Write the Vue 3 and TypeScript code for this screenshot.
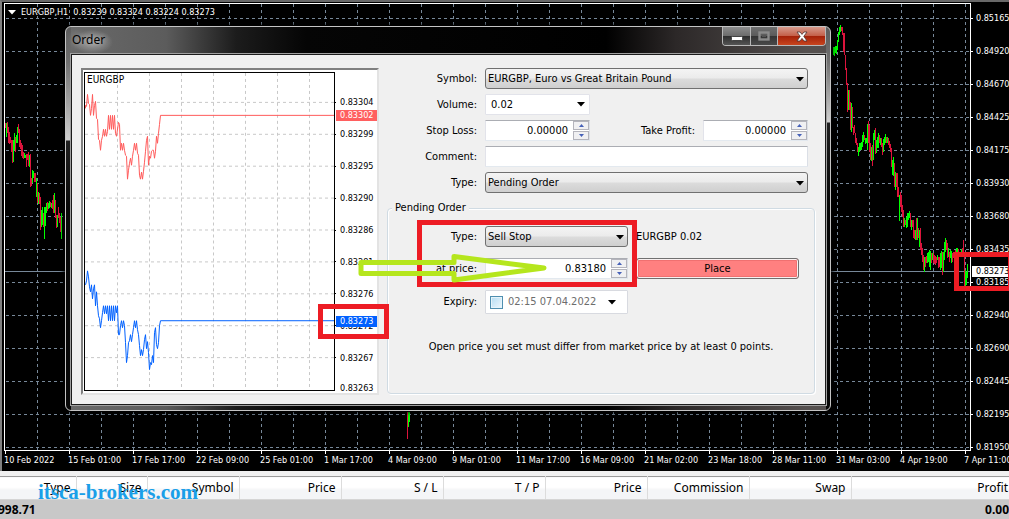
<script setup lang="ts">
import { ref } from 'vue'

type Bar = { x: number; top: number; bottom: number; up: boolean }

// Each entry reads "x high low", with a leading + for a rising bar and - for a falling one.
function readBars(src: string, originX: number, originY: number): Bar[] {
  return src.trim().split(/\s*,\s*/).map((item) => {
    const [x, high, low] = item.slice(1).split(' ').map(Number)
    return {
      x: originX + Math.floor(x / 3),
      top: originY + Math.round(high / 3),
      bottom: originY + Math.round(low / 3),
      up: item[0] === '+',
    }
  })
}

function readLine(src: string, originX: number, originY: number): string {
  return src.trim().split(/\s+/).map((pair) => {
    const [x, y] = pair.split(',').map(Number)
    return `${originX + Math.floor(x / 3) + 0.5},${originY + Math.floor(y / 3) + 0.5}`
  }).join(' ')
}

const february = readBars(`-14 357 380,-17 368 384,+19 370 410,-22 366 400,-25 380 430,-28 395 432,-31 412 430,-34 420 455,-37 420 488,+40 420 486,+43 400 450,-46 410 455,+49 405 430,+52 380 428,-55 373 400,-58 388 440,-61 420 448,-64 430 468,-67 435 475,-70 455 478,+73 458 474,+76 465 475,-79 462 500,-82 462 480,-85 456 498,+88 465 500,-91 462 560,-94 535 558,+97 510 550,+100 512 535,-103 518 545,-106 520 545,+109 535 590,-112 550 608,+115 575 612,-118 580 612,-121 592 690,+124 630 680,+127 622 675,-130 640 680,+133 620 716,+136 622 678,+139 608 640,-142 605 632,+145 610 628,+148 603 625,-151 605 622,+154 608 625,-157 600 628,-160 585 640,+163 580 640,-166 600 655,-169 645 685,+172 645 682,-175 620 655,-178 640 670,-181 650 695,+184 640 716`, 0, 0)
const march = readBars('-232 36 117,+235 36 80,+238 36 65', 330, 400)
const april = readBars(`+25 140 165,+28 140 168,+31 138 160,+34 138 162,+37 120 150,+40 95 125,+43 80 105,+46 75 95,-49 82 92,-52 82 105,-55 98 155,-58 100 165,-61 165 210,-64 205 255,-67 250 335,+70 270 330,-73 270 330,-76 305 390,+79 310 395,-82 320 385,-85 380 405,-88 375 400,-91 398 430,-94 415 435,-97 430 455,+100 440 467,+103 430 455,+106 430 450,+109 425 450,+112 405 440,+115 395 425,-118 405 420,+121 415 432,+124 415 428,+127 372 450,-130 362 430,-133 375 455,-136 430 480,+139 440 482,-142 435 497,+145 400 480,+148 390 420,-151 384 462,+154 420 460,+157 410 445,+160 400 445,-163 405 430,+166 415 435,-169 415 440,-172 430 465,+175 418 455,+178 410 435,+181 403 430,-184 410 430,+187 410 428,-190 415 435,-193 422 445,-196 432 455,-199 445 500,+202 480 525,+205 470 528,-208 490 560,+211 515 570,-214 518 560,-217 520 590,-220 560 590,+223 585 663,-226 577 620,-229 585 635,-232 615 650,-235 630 680,+238 655 680,-241 660 675,+244 650 685,+247 640 680,+250 640 660,+253 632 655,-256 640 680,+259 660 690,-262 660 680,-265 660 715,-268 690 718,+271 690 720,-274 655 720,+277 655 720,-280 685 715,+283 690 742,-286 685 750,-289 730 765,-292 745 785,-295 765 810,+298 770 815,-301 770 800,-304 768 788,+307 758 790,+310 755 785,+313 750 800,+316 752 810,-319 758 790,+322 758 780,-325 760 788,-328 765 792,-331 768 795,-334 770 788,+337 765 780,-340 772 805,-343 770 800,+346 760 810,+349 752 805,-352 755 825,+355 755 815,+358 725 780,+361 715 755,-364 720 750,-367 730 775,+370 745 770,-373 755 785,+376 750 775,+379 752 788,-382 758 785,-385 755 775,-388 755 780,-391 750 770,+394 745 770,+397 743 760,-400 748 764,+409 747 760,-412 745 765,-415 720 770,-418 760 860,+421 810 865,+424 815 855,+427 792 835`, 825, 0)
const bars = [...february, ...march, ...april]

const askLine = readLine(`255,325 257,315 259,318 262,283 265,310 268,312 271,347 274,325 277,283 280,345 283,315 286,303 289,355 292,358 295,418 298,422 301,450 304,420 307,408 310,388 313,408 316,388 319,408 322,395 325,346 328,388 331,346 334,388 337,346 340,388 343,346 346,400 349,408 355,367 358,372 361,450 364,430 367,452 370,430 373,450 376,465 379,468 382,538 385,510 388,490 391,475 394,497 397,470 400,450 403,430 406,450 409,430 412,460 415,465 418,525 421,538 424,516 427,538 430,515 433,488 436,455 439,420 442,408 445,495 448,470 451,475 454,455 457,452 460,452 463,475 466,455 469,410 472,430 475,400 478,372 481,346 1002,346`, 0, 0)
const bidLine = readLine(`75,255 78,245 82,213 85,232 88,262 91,278 94,255 97,298 100,268 103,255 106,320 109,277 112,318 115,350 118,358 121,385 124,365 127,340 130,318 133,343 136,318 139,343 142,318 145,365 148,318 151,365 154,318 157,365 160,318 163,365 166,318 169,340 172,318 175,405 178,405 181,380 184,364 187,385 190,364 193,380 196,430 199,490 202,470 205,430 208,425 211,405 214,428 217,405 220,385 223,364 226,385 229,364 232,390 235,405 238,440 241,470 244,450 247,470 250,450 253,420 256,405 259,448 262,427 265,460 268,512 271,490 274,495 277,470 280,490 283,400 286,385 289,435 292,448 295,430 298,380 301,364 822,364`, 60, 200)

const columns = Array.from({ length: 30 }, (_, i) => 37 + i * 32)
const rows = Array.from({ length: 14 }, (_, i) => 18 + i * 33)
const dateTicks = Array.from({ length: 16 }, (_, i) => 5 + i * 64)
const tickColumns = Array.from({ length: 7 }, (_, i) => 117 + i * 32)
const tickRows = Array.from({ length: 9 }, (_, i) => 102 + i * 32)

const prices = ['0.85165', '0.84920', '0.84670', '0.84425', '0.84175', '0.83930', '0.83680', '0.83435', '0.83185', '0.82940', '0.82690', '0.82445', '0.82195', '0.81950']
const dates = ['10 Feb 2022', '15 Feb 01:00', '17 Feb 17:00', '22 Feb 09:00', '25 Feb 01:00', '1 Mar 17:00', '4 Mar 09:00', '9 Mar 01:00', '11 Mar 17:00', '16 Mar 09:00', '21 Mar 02:00', '23 Mar 18:00', '28 Mar 11:00', '31 Mar 03:00', '4 Apr 19:00', '7 Apr 11:00']
const tickPrices = ['0.83304', '0.83299', '0.83295', '0.83290', '0.83286', '0.83281', '0.83276', '0.83272', '0.83267', '0.83263']
const headings = ['Type', 'Size', 'Symbol', 'Price', 'S / L', 'T / P', 'Price', 'Commission', 'Swap', 'Profit']

const volume = ref('0.02')
const stopLoss = ref('0.00000')
const takeProfit = ref('0.00000')
const comment = ref('')
const atPrice = ref('0.83180')
const expiry = ref('02:15 07.04.2022')
const expires = ref(false)
</script>

<template>
  <main class="desk">
    <section class="chart">
      <div class="plot-row">
        <svg class="plot" viewBox="4 2 970 452" preserveAspectRatio="none" aria-hidden="true">
          <g class="grid">
            <line v-for="x in columns" :key="'c' + x" :x1="x + 0.5" :x2="x + 0.5" y1="4" y2="450" />
            <line v-for="y in rows" :key="'r' + y" x1="6" x2="970" :y1="y + 0.5" :y2="y + 0.5" />
          </g>
          <rect class="level" x="5" y="271" width="965" height="1" />
          <rect
            v-for="(bar, i) in bars" :key="i" :class="bar.up ? 'rise' : 'fall'"
            :x="bar.x" :y="bar.top" width="1" :height="bar.bottom - bar.top"
          />
          <g class="axis">
            <rect x="4" y="3" width="967" height="1" />
            <rect x="4" y="3" width="1" height="448" />
            <rect x="970" y="3" width="1" height="448" />
            <rect x="4" y="450" width="967" height="1" />
            <rect v-for="x in dateTicks" :key="x" :x="x" y="450" width="1" height="4" />
            <rect v-for="y in rows" :key="y" x="970" :y="y" width="3" height="1" />
          </g>
        </svg>
        <div class="prices">
          <span v-for="p in prices" :key="p">{{ p }}</span>
          <b class="last">0.83273</b>
        </div>
      </div>
      <div class="dates"><span v-for="d in dates" :key="d">{{ d }}</span></div>
      <div class="quote">
        <svg width="8" height="5" viewBox="0 0 8 5" aria-hidden="true"><path d="M0 0H8L4 4.5Z" fill="#fff" /></svg>
        <span>EURGBP,H1&nbsp; 0.83239 0.83324 0.83224 0.83273</span>
      </div>
    </section>

    <section class="orders">
      <table>
        <thead><tr><th v-for="(h, i) in headings" :key="i" scope="col">{{ h }}</th></tr></thead>
        <tbody><tr><td colspan="9"><span class="balance">998.71</span></td><td class="profit">0.00</td></tr></tbody>
      </table>
      <a class="site" href="#">itsca-brokers.com</a>
    </section>

    <section class="dialog" role="dialog" aria-labelledby="dialog-title">
      <header class="titlebar">
        <h1 id="dialog-title">Order</h1>
        <div class="controls">
          <button class="min" type="button" aria-label="Minimize">
            <svg width="12" height="5" viewBox="0 0 12 5"><rect x="0.5" y="0.5" width="11" height="4" rx="1" fill="#fff" stroke="#444" /></svg>
          </button>
          <button class="max" type="button" aria-label="Maximize" disabled>
            <svg width="12" height="10" viewBox="0 0 12 10"><rect x="1.5" y="1.5" width="9" height="7" fill="none" stroke="#8b8b8b" stroke-width="2.4" /><rect x="4" y="4" width="4" height="2" fill="#555" /></svg>
          </button>
          <button class="close" type="button" aria-label="Close">
            <svg width="12" height="11" viewBox="0 0 12 11"><path d="M1 1H4L6 3.4 8 1H11L7.8 5.3 11 10H8L6 7.4 4 10H1L4.2 5.3Z" fill="#fff" stroke="#4a3030" stroke-width="0.8" /></svg>
          </button>
        </div>
      </header>
      <div class="client">
        <div class="ticks">
          <svg class="tick-plot" viewBox="84 70 253 324" preserveAspectRatio="none" aria-hidden="true">
            <g class="tick-grid">
              <line v-for="x in tickColumns" :key="x" :x1="x + 0.5" :x2="x + 0.5" y1="73" y2="391" />
              <line v-for="y in tickRows" :key="y" x1="85" x2="334" :y1="y + 0.5" :y2="y + 0.5" />
            </g>
            <polyline class="ask" :points="askLine" />
            <polyline class="bid" :points="bidLine" />
            <rect class="frame" x="84.5" y="72.5" width="250" height="319" />
            <rect v-for="y in tickRows" :key="'t' + y" x="334" :y="y" width="2" height="1" />
          </svg>
          <span class="tick-name">EURGBP</span>
          <div class="tick-prices">
            <span v-for="p in tickPrices" :key="p">{{ p }}</span>
            <b class="ask-tag">0.83302</b>
            <b class="bid-tag">0.83273</b>
          </div>
        </div>

        <form class="form" @submit.prevent>
          <div class="main-fields">
            <label for="symbol">Symbol:</label>
            <div class="drop wide">
              <select id="symbol"><option>EURGBP, Euro vs Great Britain Pound</option></select>
              <svg width="8" height="5" viewBox="0 0 8 5" aria-hidden="true"><path d="M0 0H8L4 4.5Z" /></svg>
            </div>
            <label for="volume">Volume:</label>
            <div class="combo">
              <input id="volume" v-model="volume" type="text">
              <button type="button" aria-label="Volume list"><svg width="8" height="5" viewBox="0 0 8 5"><path d="M0 0H8L4 4.5Z" /></svg></button>
            </div>
            <label class="row3" for="stop-loss">Stop Loss:</label>
            <div class="spin">
              <input id="stop-loss" v-model="stopLoss" type="text">
              <div class="steps">
                <button type="button" aria-label="Raise stop loss"><svg width="5" height="3" viewBox="0 0 5 3"><path d="M0 3L2.5 0 5 3Z" /></svg></button>
                <button type="button" aria-label="Lower stop loss"><svg width="5" height="3" viewBox="0 0 5 3"><path d="M0 0L2.5 3 5 0Z" /></svg></button>
              </div>
            </div>
            <label for="take-profit">Take Profit:</label>
            <div class="spin">
              <input id="take-profit" v-model="takeProfit" type="text">
              <div class="steps">
                <button type="button" aria-label="Raise take profit"><svg width="5" height="3" viewBox="0 0 5 3"><path d="M0 3L2.5 0 5 3Z" /></svg></button>
                <button type="button" aria-label="Lower take profit"><svg width="5" height="3" viewBox="0 0 5 3"><path d="M0 0L2.5 3 5 0Z" /></svg></button>
              </div>
            </div>
            <label for="comment">Comment:</label>
            <input id="comment" v-model="comment" class="box wide" type="text">
            <label for="kind">Type:</label>
            <div class="drop wide">
              <select id="kind"><option>Pending Order</option></select>
              <svg width="8" height="5" viewBox="0 0 8 5" aria-hidden="true"><path d="M0 0H8L4 4.5Z" /></svg>
            </div>
          </div>

          <fieldset class="pending">
            <legend>Pending Order</legend>
            <div class="pending-fields">
              <label for="pending-kind">Type:</label>
              <div class="drop">
                <select id="pending-kind"><option>Sell Stop</option></select>
                <svg width="8" height="5" viewBox="0 0 8 5" aria-hidden="true"><path d="M0 0H8L4 4.5Z" /></svg>
              </div>
              <span class="lot">EURGBP 0.02</span>
              <label for="at-price">at price:</label>
              <div class="spin">
                <input id="at-price" v-model="atPrice" type="text">
                <div class="steps">
                  <button type="button" aria-label="Raise price"><svg width="5" height="3" viewBox="0 0 5 3"><path d="M0 3L2.5 0 5 3Z" /></svg></button>
                  <button type="button" aria-label="Lower price"><svg width="5" height="3" viewBox="0 0 5 3"><path d="M0 0L2.5 3 5 0Z" /></svg></button>
                </div>
              </div>
              <button class="place" type="submit">Place</button>
              <label for="expiry">Expiry:</label>
              <div class="combo expiry">
                <input v-model="expires" class="tick" type="checkbox" aria-label="Set expiry">
                <input id="expiry" v-model="expiry" type="text">
                <button type="button" aria-label="Open calendar"><svg width="8" height="5" viewBox="0 0 8 5"><path d="M0 0H8L4 4.5Z" /></svg></button>
              </div>
            </div>
            <p>Open price you set must differ from market price by at least 0 points.</p>
          </fieldset>
        </form>
      </div>
    </section>

    <div class="mark mark-bid"></div>
    <div class="mark mark-type"></div>
    <div class="mark mark-last"></div>
    <svg class="arrow" width="195" height="34" viewBox="356 251 195 34" aria-hidden="true">
      <path d="M361 262.5H454V256.5L544 268 454 280V273.5H361Z" />
    </svg>
  </main>
</template>

<style>
html, body { margin: 0; background: #c8c8c8; overflow: hidden; }
</style>

<style scoped>
* { box-sizing: border-box; }
.desk {
  position: relative;
  overflow: hidden;
  color: #000;
  font: 11px/14px "DejaVu Sans Condensed", "DejaVu Sans", sans-serif;
}
button, input, select { font: inherit; color: inherit; margin: 0; padding: 0; border: 0; background: none; border-radius: 0; outline: 0; min-width: 0; }

/* price chart */
.chart { position: relative; background: #000; color: #fff; border-top: 2px solid #686868; border-left: 2px solid #808080; padding-left: 2px; font-size: 9px; }
.plot-row { display: flex; align-items: flex-start; }
.plot { flex: 1; min-width: 0; height: 452px; display: block; shape-rendering: crispEdges; }
.grid line { stroke: #778899; stroke-dasharray: 3 3; }
.level { fill: #778899; }
.rise { fill: #00ff00; }
.fall { fill: #dc143c; }
.axis rect { fill: #fff; }
.prices { position: relative; width: 35px; height: 452px; padding-left: 2px; flex: none; }
.prices span { display: block; height: 33px; line-height: 33px; white-space: nowrap; }
.last { position: absolute; left: -2px; right: 0; top: 264px; height: 11px; padding-left: 4px; background: #fff; color: #000; font-weight: normal; line-height: 11px; }
.dates { display: grid; grid-template-columns: repeat(15, minmax(0, 64fr)) minmax(0, 45fr); height: 17px; line-height: 12px; }
.dates span { white-space: nowrap; }
.quote { position: absolute; left: 6px; top: 3px; display: flex; align-items: center; gap: 5px; line-height: 14px; white-space: nowrap; }

/* orders table */
.orders { position: relative; border-top: 5px solid #f0f0f0; font: 12px/16px "Noto Sans", sans-serif; }
table { width: 100%; table-layout: fixed; border-collapse: collapse; border-top: 1px solid #9a9a9a; }
th { height: 23px; padding: 0 5px 0 0; text-align: right; font-weight: normal; border-right: 1px solid #dcdcdc; border-bottom: 1px solid #d5d5d5; background: linear-gradient(#fff 0 45%, #f4f5f7 55%); }
th:nth-child(1) { width: 76px; }
th:nth-child(2) { width: 71px; }
th:nth-child(3) { width: 92px; }
th:nth-child(n + 4) { width: 102px; }
th:last-child { width: auto; padding-right: 1px; border-right: 0; }
td { height: 20px; padding: 0; background: #c8c8c8; font-weight: bold; overflow: hidden; }
.balance { margin-left: -2px; }
.profit { text-align: right; }
.site { position: absolute; left: 38px; top: 4px; color: #1a9fe8; font: bold 21px/24px "Liberation Serif", serif; text-decoration: none; }

/* order window */
.dialog {
  position: absolute; left: 65px; top: 26px; width: 766px; padding: 0 4px 5px 5px;
  border: 1px solid #c4c4c4; border-radius: 6px; box-shadow: 0 0 5px 1px #000;
  background:
    linear-gradient(#5c5c5c, #707070 35px, #d0d0d0 113px, #202020 114px, #080808 180px) left / 5px 100% no-repeat,
    linear-gradient(#5c5c5c, #707070 35px, #d0d0d0 95px, #202020 96px, #080808 180px) right / 4px 100% no-repeat,
    linear-gradient(90deg, #6a6a6a, #5c5c5c 100px, #1c1c1c 170px, #050505 240px, #000 540px, #2c2828 610px, #55504f 740px);
}
.titlebar { display: flex; justify-content: space-between; height: 27px; }
h1 { margin: 3px 0 0 1px; padding: 0 8px 0 0; font: 12px/20px "Noto Sans", sans-serif; background: radial-gradient(closest-side, #a0a0a0, #a0a0a000); text-shadow: 0 0 6px #ccc; }
.controls { display: flex; height: 19px; border: 1px solid #b8b8b8; border-top: 0; border-radius: 0 0 4px 4px; overflow: hidden; }
.controls button { display: flex; align-items: center; justify-content: center; border-right: 1px solid #b8b8b8; background: linear-gradient(#8c8c8c, #6c6c6c 48%, #2c2c2c 50%, #555); }
.controls .min { width: 28px; padding-top: 5px; }
.controls .max { width: 27px; background: linear-gradient(#6f6f6f, #5b5b5b 48%, #333 50%, #4a4a4a); }
.controls .close { width: 47px; border-right: 0; background: linear-gradient(#d79a8c, #c4604a 48%, #a32008 50%, #c8451f); }
.client { display: flex; gap: 8px; padding: 13px 10px 9px 9px; background: #f0f0f0; border: 1px solid #1c1c1c; outline: 1px solid #a0a0a0; }

.ticks { position: relative; display: flex; flex: 0 0 298px; height: 327px; padding-left: 1px; background: #fff; border: 2px solid; border-color: #808080 #e3e3e3 #e3e3e3 #808080; font-size: 9px; }
.tick-plot { flex: 1; min-width: 0; height: 323px; shape-rendering: crispEdges; }
.tick-grid line { stroke: #c8c8c8; stroke-dasharray: 3 3; }
.ask, .bid, .frame { fill: none; stroke: #000; }
.ask { stroke: #ff5a5a; }
.bid { stroke: #0060ff; }
.tick-name { position: absolute; left: 4px; top: 3px; font-size: 10px; }
.tick-prices { position: relative; width: 40px; padding: 16px 0 0 3px; }
.tick-prices span { display: block; height: 32px; line-height: 32px; }
.tick-prices span:nth-child(10) { height: 28px; line-height: 28px; }
.tick-prices b { position: absolute; left: -1px; right: 0; height: 11px; padding-left: 4px; line-height: 11px; color: #fff; font-weight: normal; }
.ask-tag { top: 40px; background: #ff5f5f; }
.bid-tag { top: 246px; background: #0060ff; }

.form { flex: 1; min-width: 0; }
.main-fields { display: grid; grid-template-columns: 90px 105px 1fr 105px; grid-auto-rows: 21px; gap: 5px 8px; padding-right: 7px; align-items: center; }
.main-fields label, .pending-fields label { text-align: right; white-space: nowrap; }
.wide { grid-column: span 3; }
.row3 { grid-column: 1; }
.drop { position: relative; height: 21px; }
.drop select { width: 100%; height: 100%; padding-left: 2px; appearance: none; border: 1px solid #707070; border-radius: 3px; background: linear-gradient(#f4f4f4, #ebebeb 48%, #dcdcdc 52%, #cfcfcf); }
.drop svg { position: absolute; right: 4px; top: 9px; pointer-events: none; }
.box, .combo, .spin { height: 21px; background: #fff; border: 1px solid; border-color: #abadb3 #dbdfe6 #e3e9ef #e2e3ea; border-radius: 1px; }
.combo, .spin { display: flex; }
.combo { border-color: #e2e3ea; }
.combo input, .spin input { flex: 1; padding-left: 5px; }
.combo button { width: 16px; display: flex; align-items: center; justify-content: center; }
.spin input { text-align: right; padding: 0 5px 0 0; }
.steps { display: flex; flex-direction: column; width: 16px; height: 19px; gap: 1px; }
.steps button { flex: 1; display: flex; align-items: center; justify-content: center; border: 1px solid #b4b4bc; background: #f0f0f2; fill: #4560b8; }
.box { padding: 0 5px; }

.pending { margin: 8px 0 0; padding: 0; height: 193px; border: 0; position: relative; min-width: 0; }
.pending::before { content: ""; position: absolute; inset: -7px 0 0; border: 1px solid #d0dbe3; border-radius: 4px; box-shadow: inset 1px 1px #fff, 1px 1px #fff; }
.pending legend { position: relative; z-index: 1; margin-left: 5px; padding: 0 3px; background: #f0f0f0; }
.pending-fields { position: relative; display: grid; grid-template-columns: 90px 143px 1fr; grid-template-rows: 21px 21px 24px; row-gap: 11px; column-gap: 8px; padding: 11px 16px 0 0; align-items: center; }
.place { height: 21px; border: 1px solid #707070; border-radius: 3px; background: #ff8080; box-shadow: inset 0 0 0 1px #f7f0f0, inset 0 0 0 2px #f07070; }
.expiry { height: 24px; align-items: center; border-color: #d8dae0; color: #6d6d6d; }
.expiry .tick { flex: none; appearance: none; width: 13px; height: 13px; margin: 0 0 0 4px; padding: 0; border: 1px solid #4f8fb0; background: linear-gradient(135deg, #b5dcf2, #eef8fe); box-shadow: inset 0 0 0 1px #e6f4fb; }
.expiry button { width: 30px; color: #000; }
.pending p { position: relative; margin: 26px 0 0; text-align: center; white-space: nowrap; }

/* annotations */
.mark { position: absolute; border: 5px solid #ed1c24; pointer-events: none; }
.mark-bid { left: 318px; top: 304px; width: 71px; height: 35px; }
.mark-type { left: 417px; top: 220px; width: 220px; height: 67px; }
.mark-last { left: 954px; top: 252px; width: 59px; height: 39px; }
.arrow { position: absolute; left: 356px; top: 251px; pointer-events: none; }
.arrow path { fill: none; stroke: #b5e61d; stroke-width: 5; stroke-linejoin: round; }
</style>
